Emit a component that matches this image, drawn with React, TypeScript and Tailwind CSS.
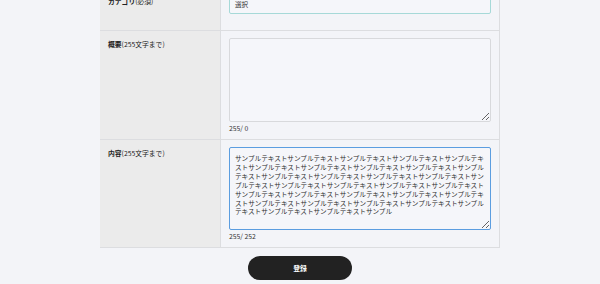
import { useState } from 'react'

const SAMPLE = 'サンプルテキスト'.repeat(31) + 'サンプル'

const Row = ({ label, note, children }: { label: string; note: string; children: React.ReactNode }) => (
  <div className="flex border-t border-[#dcdde0]">
    <div className="w-[120px] shrink-0 bg-[#ebebeb] px-[8px] pt-[9px] text-[6.8px] leading-[9px] text-[#222]">
      <span className="font-bold">{label}</span>
      <span>{note}</span>
    </div>
    <div className="flex-1 border-l border-[#dcdde0] bg-[#f3f4f8] px-[8px] pt-[7px] pb-[6px]">
      {children}
    </div>
  </div>
)

export default function App() {
  const [summary, setSummary] = useState('')
  const [content, setContent] = useState(SAMPLE)

  return (
    <div className="h-[284px] w-[600px] overflow-hidden bg-[#f3f4f8] font-['Noto_Sans_CJK_JP','Noto_Sans',sans-serif]">
      <div className="mx-[100px] -mt-[13px] border-r border-b border-[#dcdde0]">
        <div className="flex">
          <div className="w-[120px] shrink-0 bg-[#ebebeb] px-[8px] pt-[10px] text-[6.8px] leading-[9px] text-[#222]">
            <span className="font-bold">カテゴリ</span>
            <span>(必須)</span>
          </div>
          <div className="h-[43px] flex-1 border-l border-[#dcdde0] bg-[#f3f4f8] px-[8px] pt-[8px]">
            <div className="flex h-[19px] items-center rounded-[2px] border border-[#a6d9d8] bg-[#f5f6fa] px-[5px] text-[6.6px] text-[#333]">
              選択
            </div>
          </div>
        </div>

        <Row label="概要" note="(255文字まで)">
          <textarea
            value={summary}
            onChange={(e) => setSummary(e.target.value)}
            className="block h-[84px] w-full resize-y rounded-[2px] border border-[#d8d9dc] bg-[#f5f6fa] px-[5px] py-[6px] text-[6.6px] leading-[8.9px] text-[#333] outline-none"
          />
          <p className="mt-[1px] h-[10px] text-[6.8px] leading-[10px] text-[#333]">255/ {summary.length}</p>
        </Row>

        <Row label="内容" note="(255文字まで)">
          <textarea
            value={content}
            onChange={(e) => setContent(e.target.value)}
            className="block h-[83px] w-full resize-y rounded-[2px] border-[1.5px] border-[#5b9de0] bg-[#f5f6fa] px-[5px] py-[6px] text-[6.6px] leading-[8.9px] text-[#2b2b2b] outline-none"
          />
          <p className="mt-[1px] h-[10px] text-[6.8px] leading-[10px] text-[#333]">255/ {content.length}</p>
        </Row>
      </div>

      <div className="flex justify-center pt-[8px]">
        <button className="h-[24px] w-[104px] rounded-full bg-[#222] text-[6.8px] font-bold text-white">
          登録
        </button>
      </div>
    </div>
  )
}
